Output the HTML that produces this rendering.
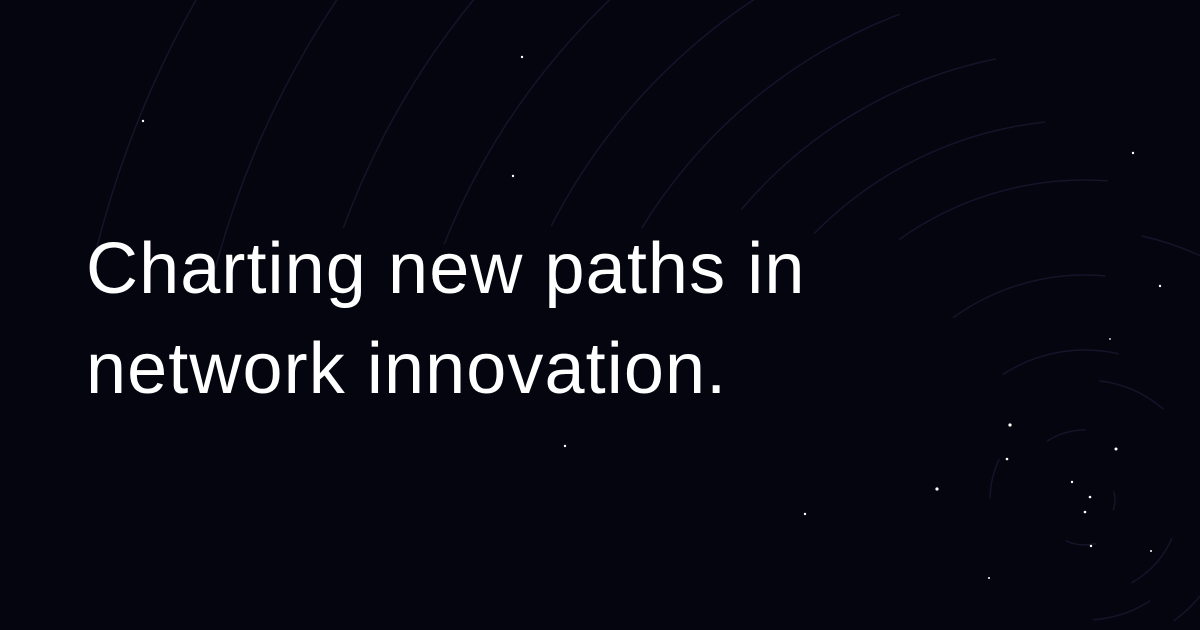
<!DOCTYPE html>
<html><head><meta charset="utf-8"><style>
html,body{margin:0;padding:0;background:#05050f;width:1200px;height:630px;overflow:hidden}
svg{position:absolute;left:0;top:0}
.t{position:absolute;left:86px;top:0;color:#fff;font-family:"Liberation Sans",sans-serif;font-size:72px;line-height:100px;letter-spacing:1.1px;white-space:nowrap}
</style></head><body>
<svg width="1200" height="630" viewBox="0 0 1200 630" fill="none">
<g stroke="#14142a" stroke-width="1.5" stroke-linecap="round">
<circle cx="1085" cy="500" r="30" stroke-dasharray="20 170" stroke-dashoffset="10"/>
<circle cx="1085" cy="500" r="45" stroke-dasharray="30 250" stroke-dashoffset="-60"/>
<circle cx="1085" cy="500" r="70" stroke-dasharray="40 400" stroke-dashoffset="150"/>
<circle cx="1085" cy="500" r="95" stroke-dasharray="60 200 40 300" stroke-dashoffset="-40"/>
<circle cx="1085" cy="500" r="120" stroke-dasharray="70 300 60 400" stroke-dashoffset="250"/>
<circle cx="1085" cy="500" r="150" stroke-dasharray="120 250 90 480" stroke-dashoffset="320"/>
<circle cx="1085" cy="500" r="185" stroke-dasharray="130 300 110 620" stroke-dashoffset="120"/>
<circle cx="1085" cy="500" r="225" stroke-dasharray="160 420 140 700" stroke-dashoffset="500"/>
<circle cx="1085" cy="500" r="270" stroke-dasharray="200 350 180 900" stroke-dashoffset="300"/>
<circle cx="1085" cy="500" r="320" stroke-dasharray="220 500 250 1040" stroke-dashoffset="700"/>
<circle cx="1085" cy="500" r="380" stroke-dasharray="260 600 300 1230" stroke-dashoffset="900"/>
<circle cx="1085" cy="500" r="450" stroke-dasharray="300 700 380 1450" stroke-dashoffset="1100"/>
<circle cx="1085" cy="500" r="520" stroke-dasharray="340 800 400 1730" stroke-dashoffset="1350"/>
<circle cx="1085" cy="500" r="600" stroke-dasharray="400 900 450 2020" stroke-dashoffset="1600"/>
<circle cx="1085" cy="500" r="690" stroke-dasharray="450 1000 500 2380" stroke-dashoffset="1900"/>
<circle cx="1085" cy="500" r="790" stroke-dasharray="500 1200 600 2660" stroke-dashoffset="2200"/>
<circle cx="1085" cy="500" r="900" stroke-dasharray="550 1400 700 3000" stroke-dashoffset="2600"/>
<circle cx="1085" cy="500" r="1020" stroke-dasharray="600 1600 800 3400" stroke-dashoffset="2950"/>
</g>
<g fill="#fff">
<circle cx="1010" cy="425" r="1.6"/><circle cx="1007" cy="459" r="1.3"/><circle cx="937" cy="489" r="1.6"/>
<circle cx="1116" cy="449" r="1.5"/><circle cx="1072" cy="482" r="1.2"/><circle cx="1090" cy="497" r="1.3"/>
<circle cx="1085" cy="512" r="1.3"/><circle cx="1091" cy="546" r="1.2"/><circle cx="1151" cy="551" r="1"/>
<circle cx="989" cy="578" r="1"/><circle cx="805" cy="514" r="1.2"/><circle cx="565" cy="446" r="1.2"/>
<circle cx="143" cy="121" r="1.2"/><circle cx="522" cy="57" r="1.2"/><circle cx="513" cy="176" r="1.2"/>
<circle cx="1133" cy="153" r="1.2"/><circle cx="1160" cy="286" r="1.2"/><circle cx="1110" cy="339" r="0.9"/>
</g>
</svg>
<div class="t" style="top:219px">Charting new paths in<br>network innovation.</div>
</body></html>
